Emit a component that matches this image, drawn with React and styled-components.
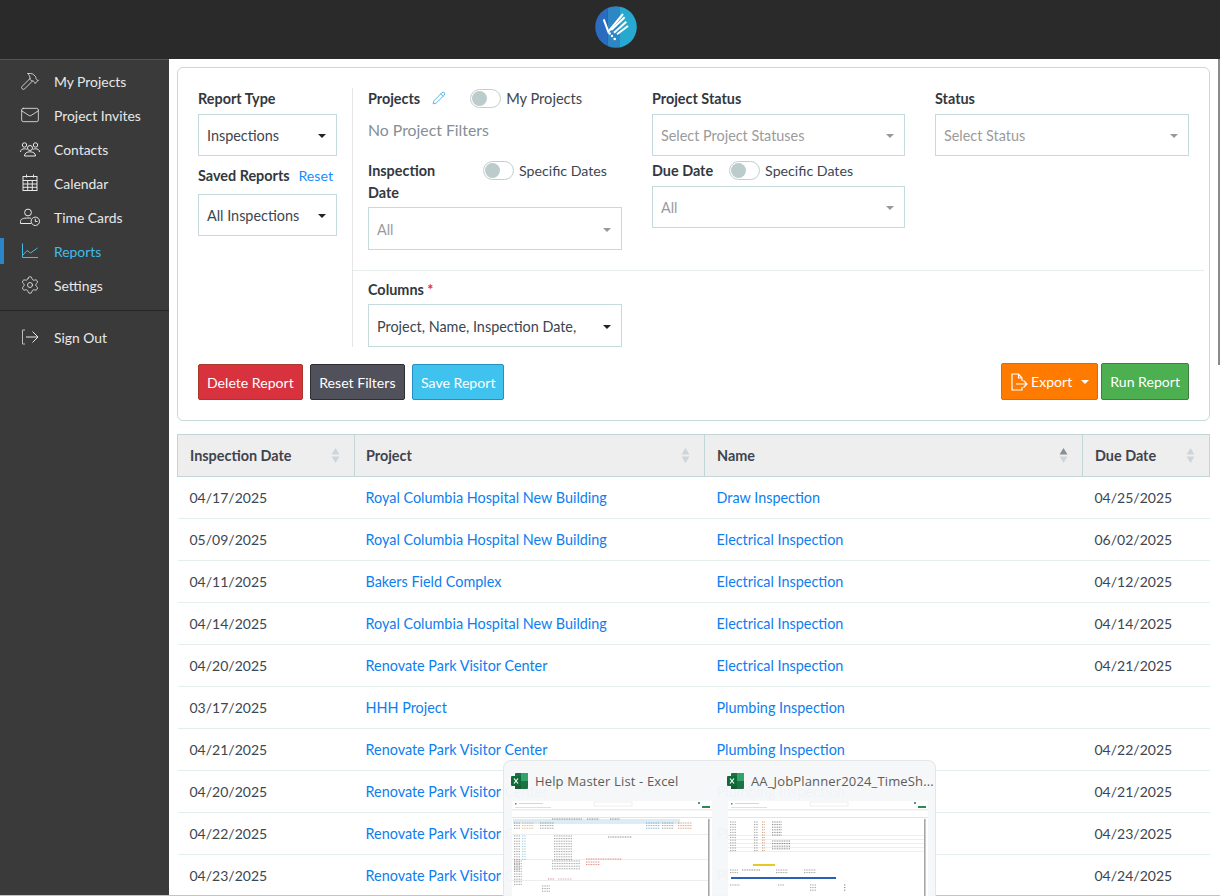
import styled, { createGlobalStyle } from 'styled-components'
import { Hammer, Mail, Settings, Pencil } from 'lucide-react'

const GlobalStyle = createGlobalStyle`
  html, body {
    margin: 0;
    height: 896px;
    overflow: hidden;
    background: #fff;
    font-family: Lato, "Open Sans", sans-serif;
    font-size: 14.4px;
    color: #32383e;
  }
  * { box-sizing: border-box; }
`

const Page = styled.div`
  position: relative;
  width: 1220px;
  height: 896px;
  overflow: hidden;
`

const TopBar = styled.header`
  height: 59px;
  background: #2a2a2a;
  display: flex;
  justify-content: center;
  align-items: center;
  padding: 0 0 5px 12px;
`

const Body = styled.div`
  display: flex;
  height: 837px;
`

const Sidebar = styled.nav`
  width: 169px;
  flex: none;
  background: #3a3a3a;
  border-top: 1px solid #555;
  padding-top: 4px;
`

const NavItem = styled.div`
  position: relative;
  height: 34px;
  display: flex;
  align-items: center;
  gap: 14px;
  padding-left: 20px;
  color: ${props => (props.$active ? '#3fbde9' : '#e8e8e8')};
  font-size: 13.9px;
  ${props => props.$active && `
    &::before {
      content: '';
      position: absolute;
      left: 0;
      top: 4px;
      width: 4px;
      height: 26px;
      background: #2a86c8;
    }
  `}
`

const NavIcon = styled.span`
  width: 20px;
  height: 20px;
  display: flex;
  align-items: center;
  justify-content: center;
  flex: none;
`

const NavDivider = styled.div`
  height: 1px;
  background: #262626;
  margin: 8px 0 9px;
`

const Main = styled.main`
  flex: 1;
  padding: 8px 10px 0 8px;
  min-width: 0;
`

const FilterCard = styled.section`
  height: 354px;
  border: 1px solid #c5dbdb;
  border-radius: 6px;
  padding: 20px;
  display: flex;
  flex-direction: column;
`

const FilterTop = styled.div`
  display: flex;
  height: 276px;
  padding-bottom: 17px;
  flex: none;
`

const LeftFilters = styled.div`
  width: 154px;
  flex: none;
`

const RightFilters = styled.div`
  flex: 1;
  border-left: 1px solid #e6e6e6;
  margin-right: -15px;
`

const RightUpper = styled.div`
  display: grid;
  grid-template-columns: 254px 253px 254px;
  column-gap: 30px;
  padding-left: 15px;
  height: 183px;
  border-bottom: 1px solid #e8eeee;
`

const FieldHead = styled.div`
  display: flex;
  align-items: center;
  height: 20px;
  width: ${props => props.$w || 'auto'};
  margin-bottom: ${props => props.$gap ?? 6}px;
  margin-top: ${props => props.$top || 0}px;
`

const Label = styled.label`
  font-weight: 700;
  color: #32383e;
  margin-right: ${props => props.$after || 0}px;
`

const ResetLink = styled.a`
  color: #1a8cff;
  margin-left: auto;
  margin-right: 4px;
  font-size: 14.2px;
`

const Select = styled.div`
  height: ${props => props.$h || 42}px;
  width: ${props => props.$w || '100%'};
  border: 1px solid #c5dbdb;
  display: flex;
  align-items: center;
  padding: ${props => (props.$h ? '1px' : '0')} 8px 0;
  color: ${props => (props.$muted ? '#9b9b9b' : '#3c4650')};
  background: #fff;
`

const SelectText = styled.span`
  flex: 1;
  white-space: nowrap;
  overflow: hidden;
`

const Caret = styled.span`
  width: 0;
  height: 0;
  margin: 1px 2px 0 10px;
  border-left: 4px solid transparent;
  border-right: 4px solid transparent;
  border-top: 4px solid ${props => (props.$muted ? '#999' : '#222')};
`

const Toggle = styled.span`
  width: 31px;
  height: 19px;
  border: 1px solid #c0d0d0;
  border-radius: 10px;
  display: flex;
  align-items: center;
  padding-left: 1px;
  margin-right: 5px;
  flex: none;
  &::before {
    content: '';
    width: 15px;
    height: 15px;
    border-radius: 50%;
    background: #bccccc;
  }
`

const ToggleText = styled.span`
  color: #3c4650;
  font-size: ${props => props.$size || 14.2}px;
  white-space: nowrap;
`

const EditIcon = styled(Pencil)`
  margin: 0 24px 0 10px;
  flex: none;
`

const NoFilters = styled.div`
  font-size: 15.8px;
  color: #868e96;
  height: 20px;
  margin: 12px 0 20px;
`

const DateHead = styled.div`
  display: flex;
  align-items: flex-start;
  margin-bottom: 3px;
`

const DateLabel = styled(Label)`
  width: 85px;
  margin-right: 30px;
  line-height: 22px;
  flex: none;
`

const DateToggle = styled.div`
  display: flex;
  align-items: center;
  height: 21px;
`

const RequiredMark = styled.span`
  color: #dc3545;
`

const ColumnsBlock = styled.div`
  width: 269px;
  padding: 8px 0 0 15px;
`

const Actions = styled.div`
  display: flex;
  gap: 7px;
  align-items: center;
`

const Button = styled.button`
  height: ${props => props.$h || 36}px;
  padding: 0 ${props => props.$pad || 8}px;
  border: 1px solid ${props => props.$border};
  background: ${props => props.$bg};
  color: #fff;
  font-family: inherit;
  font-size: 14.1px;
  border-radius: 2px;
  display: flex;
  align-items: center;
  white-space: nowrap;
  ${props => props.$push && 'margin-left: auto; margin-right: -4px; margin-top: -1px;'}
  ${props => props.$run && 'margin-top: -1px;'}
`

const WhiteCaret = styled.span`
  width: 0;
  height: 0;
  margin-left: 9px;
  border-left: 4px solid transparent;
  border-right: 4px solid transparent;
  border-top: 4px solid #fff;
`

const ExportGlyph = styled.svg`
  margin-right: 3px;
  flex: none;
`

const Table = styled.table`
  width: 1032px;
  margin-top: 13px;
  border-collapse: collapse;
  table-layout: fixed;
`

const HeadCell = styled.th`
  position: relative;
  height: 42px;
  background: #eeeeee;
  border: 1px solid #c2d6d6;
  text-align: left;
  padding: 0 12px;
  font-weight: 700;
  color: #3f444c;
  &:nth-child(2) { padding-left: 11px; }
`

const SortIcon = styled.svg`
  position: absolute;
  right: 14px;
  top: 12px;
`

const Cell = styled.td`
  height: 42px;
  padding: 0 12px;
  border-bottom: 1px solid #e3eeee;
  color: #3c4650;
  white-space: nowrap;
  font-size: ${props => (props.$date ? '14px' : 'inherit')};
  &:nth-child(2) { padding-left: 11px; }
`

const RowLink = styled.a`
  color: #0d7ef0;
`

const ScrollThumb = styled.div`
  position: absolute;
  right: 0;
  top: 59px;
  width: 2px;
  height: 306px;
  background: #8a8a8a;
`

const BottomEdge = styled.div`
  position: absolute;
  left: 0;
  right: 0;
  bottom: 0;
  height: 1px;
  background: #c4c4c4;
`

const PreviewFlyout = styled.aside`
  position: absolute;
  left: 503px;
  top: 760px;
  width: 433px;
  height: 136px;
  background: rgba(246, 247, 248, 0.97);
  border: 1px solid #e4e6e8;
  border-bottom: 0;
  border-radius: 8px 8px 0 0;
  padding: 9px 8px 0 8px;
  display: grid;
  grid-template-columns: 200px 200px;
  column-gap: 16px;
`

const PreviewTitle = styled.div`
  display: flex;
  align-items: center;
  gap: 7px;
  height: 22px;
  margin-left: -1px;
  font-family: "Open Sans", sans-serif;
  font-size: 13px;
  color: #5c5c5c;
  white-space: nowrap;
  letter-spacing: 0.15px;
`

const ExcelGlyph = styled.svg`
  flex: none;
`

const Thumb = styled.svg`
  display: block;
  margin-top: 9px;
  width: 200px;
  height: 96px;
  background: #fff;
`

const ExcelIcon = () => (
  <ExcelGlyph width="17" height="16" viewBox="0 0 17 16">
    <rect x="4" y="0" width="13" height="16" rx="1" fill="#1e7145" />
    <rect x="10" y="0" width="7" height="8" fill="#33a36b" />
    <rect x="4" y="8" width="6" height="8" fill="#185c37" />
    <rect x="0" y="3" width="10" height="10" rx="1" fill="#0f6b38" />
    <path d="M3 5.5 L7 10.5 M7 5.5 L3 10.5" stroke="#fff" strokeWidth="1.2" />
  </ExcelGlyph>
)

const Logo = () => (
  <svg width="42" height="42" viewBox="0 0 42 42">
    <defs>
      <clipPath id="logoClip"><circle cx="21" cy="21" r="20.8" /></clipPath>
    </defs>
    <g clipPath="url(#logoClip)">
      <rect width="12.5" height="42" fill="#2a6cc0" />
      <rect x="12.5" width="12.5" height="42" fill="#2f86c5" />
      <rect x="25" width="17" height="42" fill="#27a8d0" />
    </g>
    <g stroke="#fff" strokeWidth="2" fill="none">
      <path d="M8.7 13.3 L13.3 25.7 L28 8" />
      <path d="M16.3 24 L29.7 11.3" />
      <path d="M19 26.7 L31.3 15.7" />
      <path d="M22 28.3 L33 20" />
    </g>
    <g fill="#fff">
      <circle cx="14.7" cy="27.5" r="1.2" />
      <circle cx="17" cy="30" r="1.2" />
      <circle cx="19.7" cy="33" r="1.3" />
    </g>
  </svg>
)

const iconProps = {
  width: 20,
  height: 20,
  viewBox: '0 0 20 20',
  fill: 'none',
  stroke: 'currentColor',
  strokeWidth: 1,
}

const ContactsIcon = () => (
  <svg {...iconProps}>
    <circle cx="4.5" cy="6" r="2.2" />
    <circle cx="15.5" cy="6" r="2.2" />
    <circle cx="10" cy="9" r="2.5" />
    <path d="M0.5 13 C0.5 10.5 2.5 9.8 4.5 9.8 C5.5 9.8 6.2 10 6.8 10.3" />
    <path d="M19.5 13 C19.5 10.5 17.5 9.8 15.5 9.8 C14.5 9.8 13.8 10 13.2 10.3" />
    <path d="M4.5 17 C4.5 14 7 12.8 10 12.8 C13 12.8 15.5 14 15.5 17 Z" />
  </svg>
)

const CalendarIcon = () => (
  <svg {...iconProps}>
    <rect x="3" y="3.5" width="14" height="14" />
    <path d="M3 7.5 H17 M3 11 H17 M3 14.3 H17 M7.7 7.5 V17.5 M12.3 7.5 V17.5 M6.5 1.5 V4.5 M13.5 1.5 V4.5" />
  </svg>
)

const TimeCardIcon = () => (
  <svg {...iconProps}>
    <circle cx="8" cy="5.5" r="3.4" />
    <path d="M0.5 16.5 V14.5 C0.5 12 3 11 8 11 C9 11 10 11 11 11.3 M0.5 16.5 H11" />
    <circle cx="15.3" cy="14.3" r="4.2" />
    <path d="M15.3 11.8 V14.5 H17.5" />
  </svg>
)

const ReportsIcon = () => (
  <svg {...iconProps}>
    <path d="M2.5 2.5 V16.5 H18" />
    <path d="M3 14 L7 9.5 L10.5 12 L17.5 7" />
  </svg>
)

const SignOutIcon = () => (
  <svg {...iconProps}>
    <path d="M5 3 H2.5 V17 H5" stroke="#bdbdbd" />
    <path d="M6 10 H17.5 M12.5 4.5 L18 10 L12.5 15.5" />
  </svg>
)

const ExportIcon = () => (
  <ExportGlyph width="18" height="18" viewBox="0 0 18 18" fill="none" stroke="#fff" strokeWidth="1.2">
    <path d="M12 8 V5 L8.5 1 H2 V17 H12 V14" />
    <path d="M8.5 1 V5 H12" />
    <path d="M6 11 H17 M13.5 7.5 L17 11 L13.5 14.5" />
  </ExportGlyph>
)

const navItems = [
  { label: 'My Projects', icon: <Hammer size={22} strokeWidth={1} /> },
  { label: 'Project Invites', icon: <Mail size={20} strokeWidth={1} /> },
  { label: 'Contacts', icon: <ContactsIcon /> },
  { label: 'Calendar', icon: <CalendarIcon /> },
  { label: 'Time Cards', icon: <TimeCardIcon /> },
  { label: 'Reports', icon: <ReportsIcon />, active: true },
  { label: 'Settings', icon: <Settings size={20} strokeWidth={1} /> },
]

const rows = [
  ['04/17/2025', 'Royal Columbia Hospital New Building', 'Draw Inspection', '04/25/2025'],
  ['05/09/2025', 'Royal Columbia Hospital New Building', 'Electrical Inspection', '06/02/2025'],
  ['04/11/2025', 'Bakers Field Complex', 'Electrical Inspection', '04/12/2025'],
  ['04/14/2025', 'Royal Columbia Hospital New Building', 'Electrical Inspection', '04/14/2025'],
  ['04/20/2025', 'Renovate Park Visitor Center', 'Electrical Inspection', '04/21/2025'],
  ['03/17/2025', 'HHH Project', 'Plumbing Inspection', ''],
  ['04/21/2025', 'Renovate Park Visitor Center', 'Plumbing Inspection', '04/22/2025'],
  ['04/20/2025', 'Renovate Park Visitor Center', 'Plumbing Inspection', '04/21/2025'],
  ['04/22/2025', 'Renovate Park Visitor Center', 'Plumbing Inspection', '04/23/2025'],
  ['04/23/2025', 'Renovate Park Visitor Center', 'Plumbing Inspection', '04/24/2025'],
]

const columns = [
  { label: 'Inspection Date', width: 177 },
  { label: 'Project', width: 350 },
  { label: 'Name', width: 378, sorted: true },
  { label: 'Due Date', width: 127 },
]

const SortArrows = ({ sorted }) => (
  <SortIcon width="9" height="17" viewBox="0 0 9 17">
    <path d="M4.5 1 L8.5 7.5 H0.5 Z" fill={sorted ? '#8a8f94' : '#cdd5dc'} />
    <path d="M4.5 16 L8.5 9.5 H0.5 Z" fill="#cdd5dc" />
  </SortIcon>
)

// tiny dashed rows standing in for the spreadsheet cells: [x, y, width, rows, colour]
const helpBlocks = [
  [2, 22, 6, 3, '#777'], [10, 22, 12, 3, '#d39a4a'], [28, 22, 14, 3, '#777'], [40, 18, 30, 1, '#555'],
  [75, 18, 12, 1, '#555'], [98, 18, 10, 1, '#555'], [134, 22, 14, 3, '#4f8fb0'], [150, 22, 12, 3, '#777'],
  [166, 22, 14, 3, '#c07a4a'], [2, 35, 6, 14, '#777'], [10, 35, 4, 10, '#6fb0d0'], [42, 35, 18, 10, '#777'],
  [96, 36, 24, 1, '#555'], [2, 60, 8, 10, '#777'], [40, 60, 28, 4, '#777'], [74, 58, 36, 1, '#d05050'],
  [74, 61, 14, 2, '#d05050'], [36, 78, 6, 1, '#d04040'], [46, 78, 14, 1, '#d070a0'], [30, 85, 8, 3, '#777'],
]

const plannerBlocks = [
  [2, 21, 6, 12, '#777'], [26, 21, 4, 12, '#777'], [34, 21, 3, 12, '#b07040'], [44, 21, 10, 6, '#555'],
  [44, 40, 18, 4, '#555'], [2, 69, 8, 2, '#777'], [14, 69, 18, 1, '#555'], [48, 69, 12, 2, '#777'],
  [76, 69, 12, 2, '#777'], [2, 84, 10, 1, '#777'], [50, 84, 6, 1, '#777'], [82, 84, 6, 3, '#777'],
  [116, 84, 2, 3, '#555'],
]

const SheetThumb = ({ blocks, children }) => (
  <Thumb viewBox="0 0 200 96">
    <rect x="3" y="2" width="1.5" height="1.5" fill="#4a9a5a" />
    <rect x="7" y="2" width="24" height="0.6" fill="#bbb" />
    <rect x="3" y="6" width="36" height="0.6" fill="#ccc" />
    <rect x="82" y="1" width="38" height="4" fill="none" stroke="#ddd" strokeWidth="0.5" />
    <rect x="186" y="1" width="2" height="2" fill="#5a8a9a" />
    <rect x="190" y="5" width="8" height="2" fill="#2d8a4e" />
    <rect x="0" y="8.5" width="200" height="0.8" fill="#dcdce4" />
    <rect x="0" y="16" width="200" height="0.8" fill="#dcdce4" />
    <rect x="196" y="18" width="1.6" height="78" fill="#a8a8a8" />
    {children}
    {blocks.map(([x, y, w, count, color], b) =>
      Array.from({ length: count }, (_, r) => (
        <line
          key={`${b}-${r}`}
          x1={x}
          x2={x + w}
          y1={y + r * 2.6}
          y2={y + r * 2.6}
          stroke={color}
          strokeWidth="0.7"
          strokeDasharray="1 0.7"
        />
      ))
    )}
  </Thumb>
)

const App = () => (
  <Page>
    <GlobalStyle />
    <TopBar><Logo /></TopBar>
    <Body>
      <Sidebar>
        {navItems.map(item => (
          <NavItem key={item.label} $active={item.active}>
            <NavIcon>{item.icon}</NavIcon>
            {item.label}
          </NavItem>
        ))}
        <NavDivider />
        <NavItem>
          <NavIcon><SignOutIcon /></NavIcon>
          Sign Out
        </NavItem>
      </Sidebar>
      <Main>
        <FilterCard>
          <FilterTop>
            <LeftFilters>
              <FieldHead><Label>Report Type</Label></FieldHead>
              <Select $w="139px">
                <SelectText>Inspections</SelectText>
                <Caret />
              </Select>
              <FieldHead $top={9} $gap={9} $w="139px">
                <Label>Saved Reports</Label>
                <ResetLink>Reset</ResetLink>
              </FieldHead>
              <Select $w="139px">
                <SelectText>All Inspections</SelectText>
                <Caret />
              </Select>
            </LeftFilters>
            <RightFilters>
              <RightUpper>
                <div>
                  <FieldHead $gap={0}>
                    <Label $after={2}>Projects</Label>
                    <EditIcon size={14} strokeWidth={1.3} color="#2a9fd6" />
                    <Toggle />
                    <ToggleText $size={14.6}>My Projects</ToggleText>
                  </FieldHead>
                  <NoFilters>No Project Filters</NoFilters>
                  <DateHead>
                    <DateLabel>Inspection Date</DateLabel>
                    <DateToggle>
                      <Toggle />
                      <ToggleText>Specific Dates</ToggleText>
                    </DateToggle>
                  </DateHead>
                  <Select $h={43} $muted>
                    <SelectText>All</SelectText>
                    <Caret $muted />
                  </Select>
                </div>
                <div>
                  <FieldHead><Label>Project Status</Label></FieldHead>
                  <Select $muted>
                    <SelectText>Select Project Statuses</SelectText>
                    <Caret $muted />
                  </Select>
                  <FieldHead $top={4} $gap={6}>
                    <Label $after={16}>Due Date</Label>
                    <Toggle />
                    <ToggleText>Specific Dates</ToggleText>
                  </FieldHead>
                  <Select $muted>
                    <SelectText>All</SelectText>
                    <Caret $muted />
                  </Select>
                </div>
                <div>
                  <FieldHead><Label>Status</Label></FieldHead>
                  <Select $muted>
                    <SelectText>Select Status</SelectText>
                    <Caret $muted />
                  </Select>
                </div>
              </RightUpper>
              <ColumnsBlock>
                <FieldHead $gap={5}>
                  <Label>Columns <RequiredMark>*</RequiredMark></Label>
                </FieldHead>
                <Select $h={43}>
                  <SelectText>Project, Name, Inspection Date,</SelectText>
                  <Caret />
                </Select>
              </ColumnsBlock>
            </RightFilters>
          </FilterTop>
          <Actions>
            <Button $bg="#d8323e" $border="#a8382c">Delete Report</Button>
            <Button $bg="#50515b" $border="#2e2e33" $pad={8.5}>Reset Filters</Button>
            <Button $bg="#3fc3ee" $border="#2a8fc0">Save Report</Button>
            <Button $push $bg="#ff7b00" $border="#e06a00" $h={37}>
              <ExportIcon />
              Export
              <WhiteCaret />
            </Button>
            <Button $run $bg="#4caf50" $border="#3f7f43" $h={37}>Run Report</Button>
          </Actions>
        </FilterCard>
        <Table>
          <colgroup>
            {columns.map(c => <col key={c.label} style={{ width: c.width }} />)}
          </colgroup>
          <thead>
            <tr>
              {columns.map(c => (
                <HeadCell key={c.label}>
                  {c.label}
                  <SortArrows sorted={c.sorted} />
                </HeadCell>
              ))}
            </tr>
          </thead>
          <tbody>
            {rows.map((r, i) => (
              <tr key={i}>
                <Cell $date>{r[0]}</Cell>
                <Cell><RowLink>{r[1]}</RowLink></Cell>
                <Cell><RowLink>{r[2]}</RowLink></Cell>
                <Cell $date>{r[3]}</Cell>
              </tr>
            ))}
          </tbody>
        </Table>
      </Main>
    </Body>
    <ScrollThumb />
    <BottomEdge />
    <PreviewFlyout>
      <div>
        <PreviewTitle><ExcelIcon />Help Master List - Excel</PreviewTitle>
        <SheetThumb blocks={helpBlocks}>
          <rect x="1" y="18" width="167" height="5" fill="#dcecf6" />
          <rect x="0" y="33" width="196" height="0.6" fill="#e2e2e2" />
          <rect x="0" y="58" width="196" height="0.6" fill="#e2e2e2" />
          <rect x="0" y="79" width="196" height="0.6" fill="#e2e2e2" />
        </SheetThumb>
      </div>
      <div>
        <PreviewTitle><ExcelIcon />AA_JobPlanner2024_TimeSh...</PreviewTitle>
        <SheetThumb blocks={plannerBlocks}>
          <rect x="0" y="34" width="196" height="0.5" fill="#ddd" />
          <rect x="0" y="38" width="196" height="0.5" fill="#ddd" />
          <rect x="0" y="42" width="196" height="0.5" fill="#ddd" />
          <rect x="0" y="46" width="196" height="0.5" fill="#ddd" />
          <rect x="0" y="50" width="196" height="0.5" fill="#ddd" />
          <rect x="25" y="63" width="22" height="2" fill="#e6c926" />
          <rect x="3" y="76" width="105" height="2" fill="#2a5fb5" />
        </SheetThumb>
      </div>
    </PreviewFlyout>
  </Page>
)

export default App
